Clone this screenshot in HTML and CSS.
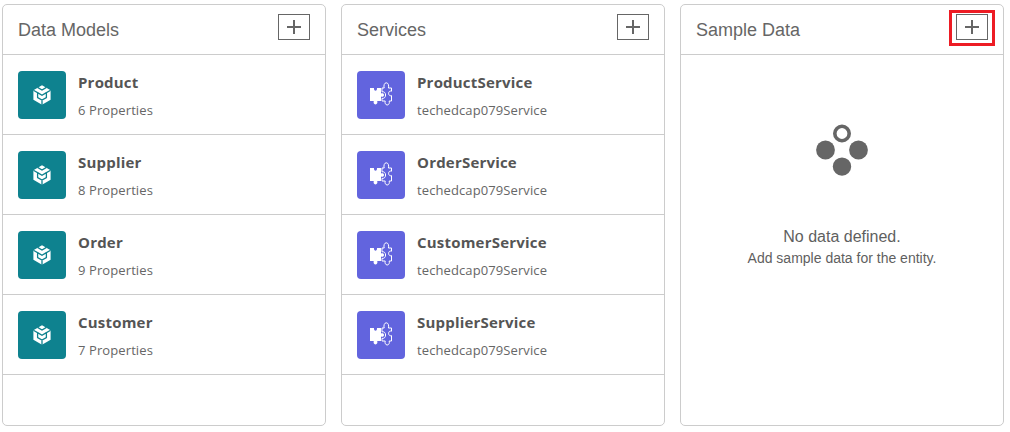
FILE: index.html
```html
<!DOCTYPE html>
<html lang="en">
<head>
<meta charset="utf-8">
<title>Project</title>
<link rel="stylesheet" href="styles.css">
</head>
<body>
<svg class="defs" width="0" height="0" aria-hidden="true">
  <symbol id="cube" viewBox="0 0 20 20">
    <path fill="#fff" d="M10 .3 18.600 5.200V14.800L10 19.700 1.400 14.800V5.200Z"/>
    <path fill="none" stroke="#0e828f" stroke-width="1.300" d="M5.600 2.400 10 5 14.400 2.400M1.400 5.200 5.600 7.600V12.500L10 15 14.400 12.500V7.600L18.600 5.200M10 15V20M5.600 7.600 10 10.200 14.400 7.600"/>
  </symbol>
  <symbol id="puzzle" viewBox="0 0 22 24">
    <path fill="#fff" d="M0 6H4C3.800 7.500 4.500 8.800 5.500 8.800S7.200 7.500 7 6H11V11.500C12.400 10.800 14 11.300 14 13S12.400 15.200 11 14.500V19H7.200C7.800 20.500 7.200 22.400 5.500 22.400S3.200 20.500 3.800 19H0Z"/>
    <path fill="none" stroke="#fff" stroke-width="1" d="M12 6H14.200C13.400 3.500 14.400 .8 16.300 .8S19.200 3.500 18.400 6H21.500V9.200C19.800 8.600 18.600 9.800 18.600 11.400S19.800 14.200 21.500 13.600V19H19.200C19.800 21 18.800 23 17.200 23S14.600 21 15.200 19H12V16.400C14 16.800 15.600 15.300 15.600 13S14 9.300 12 9.800Z"/>
  </symbol>
</svg>
<main class="board">
  <section class="card">
    <header class="card-head">
      <h2 class="card-title">Data Models</h2>
      <button class="add-btn" type="button" aria-label="Add"><span class="plus"></span></button>
    </header>
    <ul class="list">
      <li class="row"><span class="tile tile-model"><svg class="tile-icon"><use href="#cube"/></svg></span><div class="row-text"><div class="row-name">Product</div><div class="row-sub">6 Properties</div></div></li>
      <li class="row"><span class="tile tile-model"><svg class="tile-icon"><use href="#cube"/></svg></span><div class="row-text"><div class="row-name">Supplier</div><div class="row-sub">8 Properties</div></div></li>
      <li class="row"><span class="tile tile-model"><svg class="tile-icon"><use href="#cube"/></svg></span><div class="row-text"><div class="row-name">Order</div><div class="row-sub">9 Properties</div></div></li>
      <li class="row"><span class="tile tile-model"><svg class="tile-icon"><use href="#cube"/></svg></span><div class="row-text"><div class="row-name">Customer</div><div class="row-sub">7 Properties</div></div></li>
    </ul>
  </section>
  <section class="card">
    <header class="card-head">
      <h2 class="card-title">Services</h2>
      <button class="add-btn" type="button" aria-label="Add"><span class="plus"></span></button>
    </header>
    <ul class="list">
      <li class="row"><span class="tile tile-service"><svg class="tile-icon-wide"><use href="#puzzle"/></svg></span><div class="row-text"><div class="row-name">ProductService</div><div class="row-sub">techedcap079Service</div></div></li>
      <li class="row"><span class="tile tile-service"><svg class="tile-icon-wide"><use href="#puzzle"/></svg></span><div class="row-text"><div class="row-name">OrderService</div><div class="row-sub">techedcap079Service</div></div></li>
      <li class="row"><span class="tile tile-service"><svg class="tile-icon-wide"><use href="#puzzle"/></svg></span><div class="row-text"><div class="row-name">CustomerService</div><div class="row-sub">techedcap079Service</div></div></li>
      <li class="row"><span class="tile tile-service"><svg class="tile-icon-wide"><use href="#puzzle"/></svg></span><div class="row-text"><div class="row-name">SupplierService</div><div class="row-sub">techedcap079Service</div></div></li>
    </ul>
  </section>
  <section class="card">
    <header class="card-head">
      <h2 class="card-title">Sample Data</h2>
      <button class="add-btn add-btn-marked" type="button" aria-label="Add"><span class="plus"></span></button>
    </header>
    <div class="empty">
      <svg class="empty-icon" viewBox="0 0 52 52" aria-hidden="true">
        <circle cx="26" cy="9.500" r="7.200" fill="none" stroke="#666" stroke-width="3.600"/>
        <circle cx="9.500" cy="26" r="9.400" fill="#666"/>
        <circle cx="42.500" cy="26" r="9.400" fill="#666"/>
        <circle cx="26" cy="42.600" r="9.200" fill="#666"/>
      </svg>
      <p class="empty-title">No data defined.</p>
      <p class="empty-sub">Add sample data for the entity.</p>
    </div>
  </section>
</main>
</body>
</html>
```
FILE: styles.css
```css
*, *::before, *::after { box-sizing: border-box; }
html, body { margin: 0; height: 100%; background: #fff; }
body { width: 1010px; height: 432px; overflow: hidden; font-family: "Liberation Sans", Arial, sans-serif; color: #555; }
.defs { display: block; height: 0; }
.board { display: flex; gap: 15px; padding: 4px 6px 6px 2px; height: 432px; }
.card { flex: 0 0 324px; border: 1px solid #ccc; border-radius: 5px; display: flex; flex-direction: column; background: #fff; }
.card-head { height: 50px; flex: none; border-bottom: 1px solid #ccc; display: flex; align-items: flex-start; justify-content: space-between; padding: 9px 15px 0 15px; }
.card-title { margin: 6px 0 0; font-size: 18px; line-height: 21px; font-weight: 400; color: #666; }
.add-btn { width: 32px; height: 26px; padding: 0; border: 1px solid #666; background: #fff; display: flex; align-items: center; justify-content: center; position: relative; }
.add-btn-marked::after { content: ""; position: absolute; left: -8px; top: -5px; width: 46px; height: 36px; border: 3px solid #ed1c24; }
.plus { display: block; width: 14px; height: 14px; background: linear-gradient(#666, #666) center / 14px 2px no-repeat, linear-gradient(#666, #666) center / 2px 14px no-repeat; }
.list { list-style: none; margin: 0; padding: 0; }
.row { height: 80px; border-bottom: 1px solid #ccc; display: flex; align-items: flex-start; padding: 16px 15px 0; gap: 12px; }
.tile { width: 48px; height: 48px; border-radius: 4px; flex: none; display: flex; align-items: center; justify-content: center; }
.tile-model { background: #0e828f; }
.tile-service { background: #6264de; }
.tile-icon { width: 20px; height: 20px; }
.tile-icon-wide { width: 22px; height: 24px; margin-top: -2px; }
.row-name { font-family: "Open Sans", sans-serif; font-size: 15px; line-height: 20px; font-weight: 700; color: #555; margin-top: 1px; letter-spacing: .2px; }
.row-sub { font-family: "Open Sans", sans-serif; font-size: 13px; line-height: 18px; margin-top: 9px; color: #666; letter-spacing: .1px; }
.empty { flex: 1; display: flex; flex-direction: column; align-items: center; padding-top: 69px; }
.empty-icon { width: 52px; height: 52px; display: block; }
.empty-title { margin: 51px 0 0; font-size: 16px; line-height: 20px; color: #5f5f5f; }
.empty-sub { margin: 3px 0 0; font-size: 14px; line-height: 17px; color: #5f5f5f; }
```
